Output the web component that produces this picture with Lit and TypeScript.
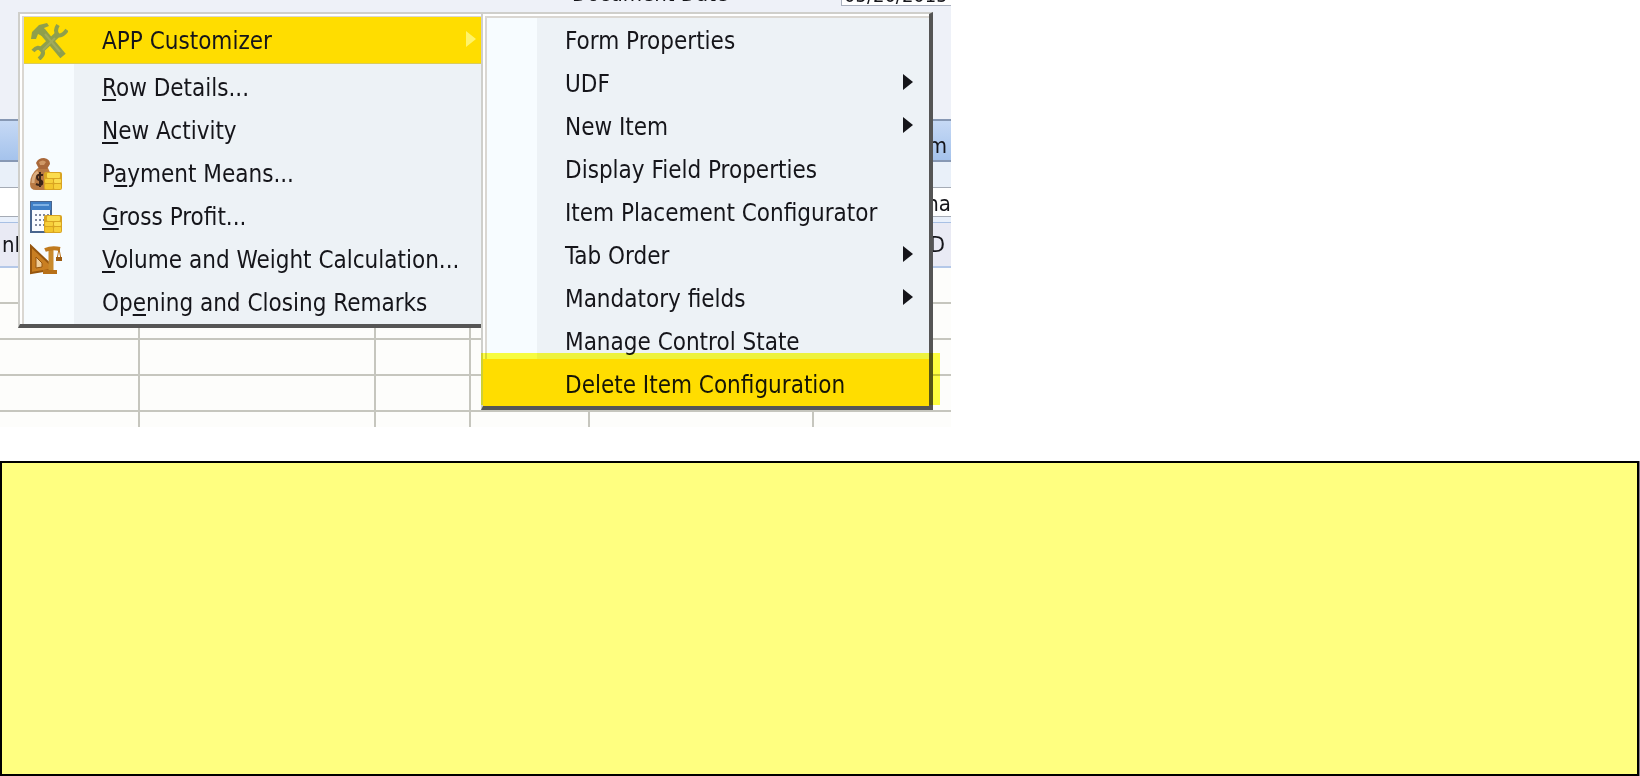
import { LitElement, html, css, svg, nothing } from "lit";
import { customElement } from "lit/decorators.js";
import { classMap } from "lit/directives/class-map.js";

interface Item {
  label: string;
  key?: number;
  icon?: unknown;
  sub?: boolean;
  hot?: boolean;
}

const coins = svg`
  <g transform="translate(0 14)">
    <rect x="14" y="0" width="18" height="18" rx="2" fill="#d9a422"/>
    <rect x="17" y="1" width="13" height="5" rx="1" fill="#fbdc4e"/>
    <rect x="15" y="7" width="8" height="4" rx="1" fill="#f7cf3a"/>
    <rect x="24" y="7" width="7" height="4" rx="1" fill="#fbdc4e"/>
    <rect x="15" y="12" width="8" height="5" rx="1" fill="#f3c52c"/>
    <rect x="24" y="12" width="7" height="5" rx="1" fill="#f7cf3a"/>
  </g>`;

const tools = html`<svg class="tools" viewBox="0 0 38 38" aria-hidden="true">
  <g fill="none" stroke="#8f9f4c" stroke-linecap="butt">
    <path d="M12 9 L33 34" stroke-width="7"/>
    <path d="M27 13 L10 29" stroke-width="6"/>
    <path d="M28 3 Q24 9 28 13 Q32 15 37 8" stroke-width="4"/>
    <path d="M3 29 Q8 23 12 28 Q15 32 9 37" stroke-width="4"/>
  </g>
  <path d="M1 17 L2 10 L9 3 L17 1 L19 4 L14 6 L17 10 L12 14 L8 12 L6 17 Z" fill="#8f9f4c"/>
  <path d="M15 12 L30 30 M25 16 L13 28" stroke="#a0aa5e" stroke-width="2" fill="none"/>
</svg>`;

const moneyBag = html`<svg viewBox="0 0 32 32" aria-hidden="true">
  <path d="M8 10 Q0 16 0 26 Q0 32 6 32 H20 Q24 20 18 10 Z" fill="#b97a45"/>
  <path d="M6 5 Q8 0 14 0 Q20 1 20 6 L17 11 H9 Z" fill="#a9683a"/>
  <path d="M9 4 Q13 1 16 4 L14 7 H10 Z" fill="#cf9866"/>
  <path d="M3 25 Q3 17 8 14" stroke="#dcae80" stroke-width="3" fill="none"/>
  <path d="M13 17 Q7 16 7 19 Q7 22 10 22 Q13 23 12 26 Q10 28 6 26 M10 14 V29" stroke="#3c2417" stroke-width="2" fill="none"/>
  ${coins}
</svg>`;

const ledger = html`<svg viewBox="0 0 32 32" aria-hidden="true">
  <rect x="1" y="1" width="20" height="30" fill="#fbfcff" stroke="#49658e" stroke-width="2"/>
  <rect x="1" y="1" width="20" height="8" fill="#3f7fc6"/>
  <rect x="3" y="3" width="16" height="2" fill="#7fb1e4"/>
  <path d="M5 14 H19 M5 19 H19 M5 24 H19" stroke="#8088a0" stroke-width="2" stroke-dasharray="2 2" fill="none"/>
  ${coins}
</svg>`;

const scale = html`<svg viewBox="0 0 32 32" aria-hidden="true">
  <path d="M1 2 L20 20 V26 L1 29 Z" fill="#c97f22" stroke="#96560f" stroke-width="2"/>
  <path d="M6 13 L12 19 V23 L6 24 Z" fill="#f0cf9c" stroke="#96560f"/>
  <path d="M21 3 V27" stroke="#c98a2c" stroke-width="5" fill="none"/>
  <path d="M15 6 Q22 3 30 5" stroke="#c07a1e" stroke-width="4" fill="none"/>
  <path d="M13 26 H27 V30 H13 Z" fill="#b87018"/>
  <path d="M29 5 L27 15 H31 Z" fill="none" stroke="#b87018" stroke-width="1"/>
  <rect x="26" y="13" width="6" height="4" fill="#9c5c12"/>
</svg>`;

const mainItems: Item[] = [
  { label: "APP Customizer", icon: tools, sub: true, hot: true },
  { label: "Row Details...", key: 0 },
  { label: "New Activity", key: 0 },
  { label: "Payment Means...", key: 1, icon: moneyBag },
  { label: "Gross Profit...", key: 0, icon: ledger },
  { label: "Volume and Weight Calculation...", key: 0, icon: scale },
  { label: "Opening and Closing Remarks", key: 2 },
];

const subItems: Item[] = [
  { label: "Form Properties" },
  { label: "UDF", sub: true },
  { label: "New Item", sub: true },
  { label: "Display Field Properties" },
  { label: "Item Placement Configurator" },
  { label: "Tab Order", sub: true },
  { label: "Mandatory fields", sub: true },
  { label: "Manage Control State" },
  { label: "Delete Item Configuration", hot: true },
];

@customElement("app-root")
export class AppRoot extends LitElement {
  static styles = css`
    :host {
      display: block;
      background: #fff;
      color: #15151a;
      font: 24px/28px "DejaVu Sans Condensed", "Noto Sans", sans-serif;
    }
    * { box-sizing: border-box; }
    .page { display: flex; flex-direction: column; gap: 34px; min-height: 100vh; }
    .shot { position: relative; width: 951px; height: 427px; overflow: hidden; background: #fdfdfb; }
    .form { display: flex; height: 119px; align-items: flex-start; background: #eef1f8; }
    .date { display: flex; align-items: flex-end; justify-content: space-between; height: 6px; padding-left: 572px; width: 100%; }
    .date label { font-size: 22px; line-height: 24px; }
    .date input {
      width: 110px; height: 34px; padding: 12px 0 0 2px; border: 1px solid #a9b0bd; border-right: 0;
      background: #fff; color: inherit; font: inherit; font-size: 20px;
    }
    .band { display: flex; align-items: flex-end; justify-content: flex-end; padding-right: 4px; font-size: 22px; }
    .band.title { height: 43px; border: solid #8798b4; border-width: 2px 0; background: linear-gradient(#c6d9f5, #a5c3ec); }
    .band.gap { height: 26px; background: #e9f0f9; border-bottom: 1px solid #a5abb5; }
    .band.field { height: 29px; background: #fff; border-bottom: 1px solid #a5abb5; padding: 0; line-height: 24px; }
    .band.rule { height: 6px; background: #e9f0fb; border-bottom: 1px solid #a8c0e4; }
    table { width: 100%; border-collapse: collapse; table-layout: fixed; }
    th, td { height: 36px; padding: 0; border: 0 solid #c6c6be; border-bottom-width: 2px; border-right-width: 2px; }
    th { height: 44px; background: #e9eaf4; border-color: #b4c8e8; border-right: 0; font-size: 22px; font-weight: 400; text-align: left; padding-left: 2px; white-space: nowrap; }
    th:last-child { text-align: right; padding-right: 6px; }
    td:last-child { border-right: 0; }
    .c1 { width: 139px; } .c2 { width: 236px; } .c3 { width: 95px; } .c4 { width: 119px; } .c5 { width: 224px; }

    .menu {
      position: absolute; top: 12px; margin: 0; padding: 0; list-style: none;
      border: 2px solid #cfcfcb; border-bottom: 4px solid #555;
      box-shadow: inset 2px 2px #fff, inset 4px 4px #dad7d2;
      background: linear-gradient(90deg, #f7fcff 54px, #edf2f6 54px);
    }
    .main { left: 18px; width: 466px; height: 316px; }
    .flyout { left: 481px; width: 452px; height: 398px; border-right: 4px solid #555; }
    .item {
      display: flex; align-items: center; width: 100%; height: 43px; padding: 0 20px 0 8px; border: 0;
      background: none; color: inherit; font: inherit; text-align: left; white-space: nowrap;
    }
    .main li:first-child { padding: 3px 0 2px 4px; }
    .main .item { padding-left: 10px; }
    .main .hot { height: 47px; padding: 0 6px; background: #fd0; box-shadow: inset 0 -1px #d9cb5e; }
    .flyout li:first-child { padding-top: 5px; }
    .flyout .item { padding: 0 16px 0 0; }
    .flyout .hot { background: #fd0; box-shadow: 0 -4px #fd0; }
    .mark { position: absolute; left: 481px; top: 353px; width: 459px; height: 52px; background: #ff0; mix-blend-mode: multiply; opacity: .75; pointer-events: none; }
    .icon { display: flex; width: 72px; flex: none; }
    .flyout .icon { width: 82px; }
    .icon svg { width: 32px; height: 32px; }
    .icon .tools { width: 38px; height: 38px; }
    .label { flex: 1; }
    .label u { text-decoration-thickness: 2px; text-underline-offset: 3px; }
    .arrow { width: 10px; height: 16px; margin-bottom: 4px; fill: currentColor; }
    .main .arrow { fill: #fff36a; }
    .note { flex: 1; margin-right: 1px; border: 2px solid #000; background: #ffff80; box-shadow: 1px 0 #857a8c; }
  `;

  private row(i: Item) {
    const k = i.key;
    return html`<li role="none">
      <button class=${classMap({ item: true, hot: !!i.hot })} role="menuitem">
        <span class="icon">${i.icon ?? nothing}</span>
        <span class="label">${k === undefined ? i.label : html`${i.label.slice(0, k)}<u>${i.label[k]}</u>${i.label.slice(k + 1)}`}</span>
        ${i.sub ? html`<svg class="arrow" viewBox="0 0 10 16" aria-hidden="true"><path d="M0 0 L10 8 L0 16 Z"/></svg>` : nothing}
      </button>
    </li>`;
  }

  render() {
    return html`<main class="page">
      <section class="shot">
        <div class="form">
          <div class="date"><label for="date">Document Date</label><input id="date" value="05/20/2015"></div>
        </div>
        <div class="band title">m</div>
        <div class="band gap"></div>
        <div class="band field">na</div>
        <div class="band rule"></div>
        <table>
          <colgroup><col class="c1"><col class="c2"><col class="c3"><col class="c4"><col class="c5"><col></colgroup>
          <thead><tr><th>nl</th><th></th><th></th><th></th><th></th><th>D</th></tr></thead>
          <tbody>${[0, 1, 2, 3, 4].map(() => html`<tr><td></td><td></td><td></td><td></td><td></td><td></td></tr>`)}</tbody>
        </table>
        <ul class="menu main" role="menu">${mainItems.map((i) => this.row(i))}</ul>
        <ul class="menu flyout" role="menu">${subItems.map((i) => this.row(i))}</ul>
        <div class="mark"></div>
      </section>
      <section class="note"></section>
    </main>`;
  }
}
